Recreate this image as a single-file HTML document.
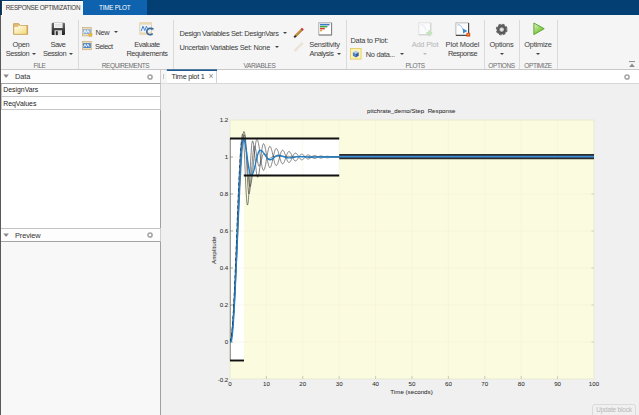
<!DOCTYPE html>
<html><head><meta charset="utf-8"><title>Response Optimization</title>
<style>
html,body{margin:0;padding:0;}
body{width:639px;height:415px;overflow:hidden;background:#f0f0f0;font-family:"Liberation Sans",sans-serif;position:relative;color:#222;}
.abs{position:absolute;}
#tabbar{left:0;top:0;width:639px;height:15px;background:#043f74;}
#tab1{white-space:nowrap;left:2px;top:1px;width:81px;height:15px;background:#f5f5f5;border-left:1px solid #fff;border-top:1px solid #fff;box-sizing:border-box;color:#3a3a3a;font-size:6.3px;line-height:12px;text-align:center;letter-spacing:-0.32px;}
#tab2{white-space:nowrap;left:83px;top:0;width:63.5px;height:15px;background:#0f63ae;color:#fff;font-size:6.3px;line-height:15px;text-align:center;letter-spacing:-0.2px;}
#ribbon{left:1px;top:15px;width:638px;height:55px;background:#f5f5f5;border-bottom:1px solid #c8c8c8;box-sizing:border-box;}
.sep{position:absolute;top:20px;width:1px;height:49px;background:#dadada;}
.lbl{position:absolute;top:61.9px;font-size:6.5px;color:#6e6e6e;text-align:center;line-height:8px;letter-spacing:-0.42px;white-space:nowrap;}
.rt{position:absolute;font-size:7.4px;color:#3c3c3c;line-height:9.25px;white-space:nowrap;text-align:center;letter-spacing:-0.3px;}
.rl{position:absolute;font-size:7.4px;color:#3c3c3c;line-height:9px;white-space:nowrap;text-align:left;letter-spacing:-0.35px;}
.dd{position:absolute;width:0;height:0;border-left:2.3px solid transparent;border-right:2.3px solid transparent;border-top:2.6px solid #444;margin-left:-0.3px}
.di{display:inline-block;width:0;height:0;border-left:2.3px solid transparent;border-right:2.3px solid transparent;border-top:2.6px solid #444;vertical-align:middle;margin-left:3px;margin-bottom:1px;}
.panelhdr{position:absolute;left:1px;width:159px;height:13px;background:#fdfdfd;border-bottom:1px solid #a4a4a4;border-right:1px solid #cdcdcd;font-size:7.4px;line-height:13px;color:#333;letter-spacing:-0.1px;}
.row{position:absolute;left:1px;width:158px;height:12px;background:#fff;border:1px solid #c6c6c6;border-top:none;font-size:6.9px;line-height:12px;color:#222;text-indent:1.2px;box-sizing:content-box;}
.tk{font-size:6.2px;fill:#303030;stroke:#303030;stroke-width:0.05px;font-family:"Liberation Sans",sans-serif;}
</style></head><body>

<div id="tabbar" class="abs"></div>
<div id="ribbon" class="abs"></div>
<div id="tab1" class="abs">RESPONSE OPTIMIZATION</div>
<div id="tab2" class="abs">TIME PLOT</div>

<!-- separators -->
<div class="sep" style="left:78px"></div>
<div class="sep" style="left:173px"></div>
<div class="sep" style="left:346px"></div>
<div class="sep" style="left:484px"></div>
<div class="sep" style="left:519px"></div>
<div class="sep" style="left:557px"></div>

<!-- section labels -->
<div class="lbl" style="left:1px;width:77px">FILE</div>
<div class="lbl" style="left:78px;width:95px">REQUIREMENTS</div>
<div class="lbl" style="left:173px;width:173px">VARIABLES</div>
<div class="lbl" style="left:346px;width:138px">PLOTS</div>
<div class="lbl" style="left:484px;width:35px">OPTIONS</div>
<div class="lbl" style="left:519px;width:38px">OPTIMIZE</div>

<!-- FILE -->
<svg class="abs" style="left:12px;top:22px" width="18" height="15" viewBox="0 0 18 15">
  <defs><linearGradient id="fg" x1="0" y1="0" x2="1" y2="1"><stop offset="0" stop-color="#fffdf0"/><stop offset="1" stop-color="#f3dc7c"/></linearGradient></defs>
  <path d="M1.6 1.7 h5.2 l1.4 1.8 h7.4 v8.8 h-14z" fill="#e3c078" stroke="#c79c52" stroke-width="0.9"/>
  <path d="M2.3 4.9 h3.2 l1.2 -1.1 h7.4 v8 h-11.8z" fill="url(#fg)"/>
</svg>
<div class="rt" style="left:1px;top:40px;width:40px">Open<br><span style="letter-spacing:-0.38px">Session</span><span class="di"></span></div>
<svg class="abs" style="left:51px;top:22px" width="15" height="14" viewBox="0 0 15 14">
  <defs><linearGradient id="sg" x1="0" y1="0" x2="0" y2="1"><stop offset="0" stop-color="#6e6e6e"/><stop offset="1" stop-color="#1e1e1e"/></linearGradient></defs>
  <rect x="0.7" y="0.7" width="13.3" height="12.4" rx="1" fill="url(#sg)"/>
  <rect x="3" y="1" width="8.6" height="5" fill="#f4f4f4"/>
  <path d="M4 2.6h6.5M4 4.2h6.5" stroke="#c8c8c8" stroke-width="0.5"/>
  <rect x="3.5" y="8.3" width="7.5" height="4.8" fill="#dedede"/>
  <rect x="4.8" y="9.2" width="2" height="3.9" fill="#333"/>
</svg>
<div class="rt" style="left:38px;top:40px;width:40px"><span style="letter-spacing:-0.45px">Save</span><br><span style="letter-spacing:-0.45px">Session</span><span class="di"></span></div>

<!-- REQUIREMENTS -->
<svg class="abs" style="left:81.5px;top:27px" width="11" height="10" viewBox="0 0 11 10">
  <rect x="0.5" y="0.5" width="8.8" height="8.4" fill="#ecdcb4" stroke="#c9ae80" stroke-width="0.7"/>
  <rect x="1" y="2.2" width="7.8" height="4.8" fill="#8fb4e2"/>
  <path d="M1.6 6.2 L3 3.2 L4.4 5.8 L5.8 3.2 L7.2 5.8" fill="none" stroke="#fff" stroke-width="0.9"/>
  <path d="M8.4 5.6 l0.7 1.4 1.5 0.2 -1.1 1.1 0.3 1.5 -1.4 -0.7 -1.4 0.7 0.3 -1.5 -1.1 -1.1 1.5 -0.2z" fill="#f2c12e" stroke="#b98d1c" stroke-width="0.3"/>
</svg>
<div class="rl" style="left:95.5px;top:28px;font-size:7.4px">New</div>
<div class="dd" style="left:114.2px;top:30.8px"></div>
<svg class="abs" style="left:81.5px;top:41px" width="11" height="10" viewBox="0 0 11 10">
  <rect x="0.5" y="0.5" width="8.8" height="8.2" fill="#ecdcb4" stroke="#c9ae80" stroke-width="0.7"/>
  <rect x="1" y="2.1" width="7.8" height="4.9" fill="#4a86cc"/>
  <path d="M1.6 6.2 L3 3.2 L4.4 5.8 L5.8 3.2 L7.2 5.8" fill="none" stroke="#fff" stroke-width="0.9"/>
</svg>
<div class="rl" style="left:95px;top:42px;font-size:7.4px;letter-spacing:-0.5px">Select</div>
<svg class="abs" style="left:139px;top:22px" width="16" height="15" viewBox="0 0 16 15">
  <rect x="0.8" y="0.8" width="11.8" height="11.4" fill="#edf2f9" stroke="#d8c298" stroke-width="0.7"/>
  <rect x="0.8" y="0.8" width="11.8" height="1.8" fill="#ecd9ae"/>
  <rect x="0.8" y="10.4" width="11.8" height="1.8" fill="#ecd9ae"/>
  <path d="M2.2 9 L4 4.2 L5.8 8.6 L7.4 4.2 L8.4 6.5" fill="none" stroke="#4a86cc" stroke-width="1"/>
  <path d="M13.6 11.4 A3.2 3.2 0 1 1 13.4 7.4" fill="none" stroke="#3e6a9c" stroke-width="1.7"/>
  <path d="M11.9 5.6 L14.6 5.9 L14.2 8.6z" fill="#3e6a9c"/>
</svg>
<div class="rt" style="left:122px;top:40px;width:50px;letter-spacing:-0.4px">Evaluate<br>Requirements</div>

<!-- VARIABLES -->
<div class="rl" style="left:179.5px;top:28.8px;letter-spacing:-0.35px">Design Variables Set: DesignVars</div>
<div class="dd" style="left:283.5px;top:31.5px"></div>
<div class="rl" style="left:179.5px;top:42.6px;letter-spacing:-0.29px">Uncertain Variables Set: None</div>
<div class="dd" style="left:274.8px;top:45.5px"></div>
<svg class="abs" style="left:292.5px;top:27px" width="12" height="12" viewBox="0 0 12 12">
  <path d="M2.4 9 L8.8 2.6" stroke="#c89448" stroke-width="2.5" stroke-linecap="butt"/>
  <path d="M2.9 9.5 L9.3 3.1" stroke="#9a6a2a" stroke-width="0.7"/>
  <path d="M1.2 10.4 L2.9 8.7" stroke="#3a3028" stroke-width="2"/>
  <path d="M8.5 3 L9.9 1.6" stroke="#c83838" stroke-width="2.5"/>
</svg>
<svg class="abs" style="left:292.5px;top:41px" width="12" height="12" viewBox="0 0 12 12">
  <path d="M1.6 10 L9.8 1.8" stroke="#ebe4d6" stroke-width="2.5" stroke-linecap="butt"/>
</svg>
<svg class="abs" style="left:317.5px;top:21.6px" width="15" height="14" viewBox="0 0 15 14">
  <rect x="0.8" y="0.8" width="12.8" height="12.2" fill="#fefefe" stroke="#a4a4a4" stroke-width="0.9"/>
  <path d="M13.6 1 V13 H1" fill="none" stroke="#7c7c7c" stroke-width="0.9"/>
  <rect x="2" y="1.9" width="9.6" height="1.5" fill="#3a78c8"/>
  <rect x="2" y="3.9" width="7.4" height="1.5" fill="#3aa844"/>
  <rect x="2" y="5.9" width="4.8" height="1.5" fill="#d83a30"/>
  <rect x="2" y="7.9" width="2" height="1.4" fill="#e8a030"/>
</svg>
<div class="rt" style="left:304px;top:40px;width:41px;letter-spacing:-0.25px"><span style="margin-right:0px">Sensitivity</span><br><span style="margin-left:1px;letter-spacing:-0.44px">Analysis<span class="di"></span></span></div>

<!-- PLOTS -->
<div class="rl" style="left:350.5px;top:35.7px;letter-spacing:-0.24px">Data to Plot:</div>
<svg class="abs" style="left:350px;top:47.8px" width="12" height="12" viewBox="0 0 12 12">
  <rect x="0.5" y="0.5" width="10.6" height="10.6" fill="#fbf2b8" stroke="#e4cd62" stroke-width="0.9"/>
  <path d="M2.9 4.3 L5.8 2.8 L8.7 4.3 L5.8 5.9z" fill="#a9c9ef"/>
  <path d="M2.9 4.3 L5.8 5.9 V9.4 L2.9 7.8z" fill="#4a7ec4"/>
  <path d="M8.7 4.3 L5.8 5.9 V9.4 L8.7 7.8z" fill="#2f5fa4"/>
</svg>
<div class="rl" style="left:365.8px;top:49.7px;letter-spacing:-0.3px">No data...</div>
<div class="dd" style="left:399.8px;top:52.5px"></div>
<svg class="abs" style="left:417.5px;top:21.8px" width="16" height="15" viewBox="0 0 16 15">
  <rect x="0.8" y="0.8" width="12" height="12" fill="#fbfbfb" stroke="#dcdcdc" stroke-width="0.8"/>
  <path d="M12.8 1 V12.8 H1" fill="none" stroke="#cfcfcf" stroke-width="1"/>
  <path d="M2.5 3 Q6 1.5 8 8.5" fill="none" stroke="#dbe5f2" stroke-width="0.8"/>
  <path d="M11.2 8.2 v6 M8.2 11.2 h6" stroke="#c6e3bf" stroke-width="2.2"/>
</svg>
<div class="rt" style="left:405px;top:40px;width:40px;color:#b4b4b4;letter-spacing:-0.15px">Add Plot</div>
<div class="dd" style="left:423px;top:52.5px;border-top-color:#bbb"></div>
<svg class="abs" style="left:454.5px;top:21.6px" width="17" height="16" viewBox="0 0 17 16">
  <rect x="0.9" y="0.9" width="12.6" height="12.4" fill="#fefefe" stroke="#a8a8a8" stroke-width="0.8"/>
  <path d="M13.6 1 V13.4 H1" fill="none" stroke="#4a4a4a" stroke-width="1.2"/>
  <path d="M2.3 3 Q6 1.4 8.3 8.6" fill="none" stroke="#86b0e6" stroke-width="0.8"/>
  <path d="M8 6.6 L12.4 9 L8 11.4z" fill="#3a8ad8"/>
  <rect x="11.4" y="10.8" width="3.8" height="3.8" fill="#d8501c"/>
  <rect x="12.4" y="11.6" width="1.6" height="1.6" fill="#f0a040"/>
</svg>
<div class="rt" style="left:440px;top:40px;width:45px;letter-spacing:-0.11px">Plot Model<br><span style="letter-spacing:-0.52px">Response</span></div>

<!-- OPTIONS -->
<svg class="abs" style="left:495px;top:22.5px" width="14" height="14" viewBox="0 0 14 14">
  <defs><radialGradient id="gg"><stop offset="0" stop-color="#f4f4f4"/><stop offset="1" stop-color="#b8b8b8"/></radialGradient></defs>
  <circle cx="6.7" cy="6.6" r="5.3" fill="none" stroke="#6a6a6a" stroke-width="1.2" stroke-dasharray="2.4,1.763"/>
  <circle cx="6.7" cy="6.6" r="5" fill="#606060"/>
  <circle cx="6.7" cy="6.6" r="3.1" fill="#4e4e4e"/><circle cx="6.7" cy="6.6" r="2.4" fill="url(#gg)"/>
</svg>
<div class="rt" style="left:484px;top:40px;width:35px;letter-spacing:-0.21px">Options</div>
<div class="dd" style="left:499.8px;top:52.5px"></div>

<!-- OPTIMIZE -->
<svg class="abs" style="left:531.5px;top:21px" width="14" height="15" viewBox="0 0 14 15">
  <defs><linearGradient id="pg" x1="0" y1="0" x2="0.8" y2="1"><stop offset="0" stop-color="#e4f4d0"/><stop offset="0.6" stop-color="#8fd058"/><stop offset="1" stop-color="#6cb83a"/></linearGradient></defs>
  <path d="M1.9 2 L12.2 7.7 L1.9 13.6z" fill="url(#pg)" stroke="#5aa630" stroke-width="1" stroke-linejoin="round"/>
</svg>
<div class="rt" style="left:519px;top:40px;width:38px;letter-spacing:-0.21px">Optimize</div>
<div class="dd" style="left:536.2px;top:52.5px"></div>

<!-- collapse icon -->
<svg class="abs" style="left:628px;top:60px" width="8" height="8" viewBox="0 0 8 8">
  <path d="M1 1.6 h6" stroke="#8a8a8a" stroke-width="1"/>
  <path d="M1.2 6.9 L4 3.4 L6.8 6.9z" fill="#8a8a8a"/>
</svg>

<!-- LEFT PANEL -->
<div class="abs" style="left:1px;top:70px;width:159px;height:345px;background:#fff;border-right:1px solid #a0a0a0;"></div>
<div class="panelhdr" style="top:70px"><span style="position:absolute;left:14px">Data</span></div>
<svg class="abs" style="left:3.4px;top:74.4px" width="7" height="5" viewBox="0 0 7 5"><path d="M0.3 0.4 H5.9 L3.1 4z" fill="#8a8a8a"/></svg>
<svg class="abs" style="left:145.5px;top:72.8px" width="8" height="8" viewBox="0 0 8 8"><circle cx="4" cy="4" r="2.1" fill="#fff" stroke="#a2a2a2" stroke-width="1.5"/></svg>
<div class="row" style="top:84px">DesignVars</div>
<div class="row" style="top:97px;height:12px;line-height:13.2px">ReqValues</div>
<div class="panelhdr" style="top:228px;border-top:1px solid #c2c2c2;height:12px;line-height:13.4px"><span style="position:absolute;left:14px">Preview</span></div>
<svg class="abs" style="left:3.4px;top:233.2px" width="7" height="5" viewBox="0 0 7 5"><path d="M0.3 0.4 H5.9 L3.1 4z" fill="#8a8a8a"/></svg>
<svg class="abs" style="left:145.5px;top:231.0px" width="8" height="8" viewBox="0 0 8 8"><circle cx="4" cy="4" r="2.1" fill="#fff" stroke="#a2a2a2" stroke-width="1.5"/></svg>
<div class="abs" style="left:1px;top:242px;width:159px;height:173px;background:#f8f8f8;"></div>

<!-- DOC AREA -->
<div class="abs" style="left:161px;top:70px;width:6px;height:13px;background:#f6f6f6;border-bottom:1px solid #dcdcdc;border-radius:0 0 2px 2px;"></div>
<div class="abs" style="left:163.4px;top:73.5px;width:1px;height:5.5px;background:#c4c4c4;"></div>
<div class="abs" style="left:167px;top:70px;width:472px;height:13px;background:#fff;border-bottom:1px solid #d8d8d8;"></div>
<div class="abs" style="left:167px;top:70px;width:50px;height:13px;background:#fff;box-sizing:border-box;border-right:1px solid #d4d4d4;font-size:7.2px;line-height:11px;color:#2a2a2a;white-space:nowrap;letter-spacing:-0.22px"><span style="position:absolute;left:4.6px;top:1.4px">Time plot 1</span><span style="position:absolute;left:41.6px;top:1.2px;color:#858585;font-size:8.6px">×</span></div>
<svg class="abs" style="left:623.3px;top:72.5px" width="8" height="8" viewBox="0 0 8 8"><circle cx="4" cy="4" r="2.1" fill="#fff" stroke="#a2a2a2" stroke-width="1.5"/></svg>

<!-- PLOT -->
<svg class="abs" style="left:0;top:0" width="639" height="415" viewBox="0 0 639 415">
  <defs><clipPath id="ax"><rect x="230" y="120" width="364" height="259"/></clipPath></defs>
  <rect x="166.8" y="69.4" width="50.2" height="1.5" fill="#0b4a86"/>
  <rect x="230" y="120" width="364" height="259" fill="#fbfbdf"/>
  <!-- allowed white region -->
  <path d="M230 138.5 H339.2 V155 H594 V159 H339.2 V175.5 H244 V360.5 H230z" fill="#fff"/>
  <!-- grid -->
  <g stroke="#f3f2dc" stroke-width="0.6">
    <path d="M266.4 120V379 M302.8 120V379 M339.2 120V379 M375.6 120V379 M412 120V379 M448.4 120V379 M484.8 120V379 M521.2 120V379 M557.6 120V379"/>
    <path d="M230 157H594 M230 194H594 M230 231H594 M230 268H594 M230 305H594 M230 342H594"/>
  </g>
  <!-- axes box -->
  <rect x="230" y="120" width="364" height="259" fill="none" stroke="#e6e6cc" stroke-width="0.8"/>
  <path d="M230.3 138.5 V360.5" fill="none" stroke="#555" stroke-width="0.7"/>
  <g stroke="#777" stroke-width="0.6">
    <path d="M230 157h3 M230 194h3 M230 231h3 M230 268h3 M230 305h3 M230 342h3"/>
    <path d="M594 157h-2.5 M594 194h-2.5 M594 231h-2.5 M594 268h-2.5 M594 305h-2.5 M594 342h-2.5" stroke="#b5b5a5"/>
    <path stroke="#b0b0a0" d="M266.4 379v-3 M302.8 379v-3 M339.2 379v-3 M375.6 379v-3 M412 379v-3 M448.4 379v-3 M484.8 379v-3 M521.2 379v-3 M557.6 379v-3"/>
  </g>
  <g clip-path="url(#ax)">
  <path d="M230.0 342.0L230.3 341.9L230.5 341.4L230.8 340.6L231.1 339.5L231.4 338.0L231.6 336.2L231.9 334.1L232.2 331.7L232.4 328.9L232.7 325.8L233.0 322.4L233.3 318.8L233.5 314.8L233.8 310.6L234.1 306.1L234.3 301.3L234.6 296.3L234.9 291.1L235.2 285.7L235.4 280.1L235.7 274.3L236.0 268.4L236.2 262.4L236.5 256.2L236.8 250.0L237.1 243.6L237.3 237.3L237.6 230.9L237.9 224.5L238.1 218.1L238.4 211.8L238.7 205.5L239.0 199.4L239.2 193.3L239.5 187.4L239.8 181.7L240.0 176.2L240.3 170.8L240.6 165.8L240.9 161.0L241.1 156.4L241.4 152.2L241.7 148.3L241.9 144.8L242.2 141.6L242.5 138.9L242.8 136.5L243.0 134.6L243.3 133.1L243.6 132.1L243.8 131.6L244.1 131.5L244.4 132.0L244.7 133.0L244.9 134.6L245.2 136.6L245.5 139.1L245.7 142.1L246.0 145.3L246.3 148.8L246.6 152.5L246.8 156.4L247.1 160.3L247.4 164.2L247.6 168.0L247.9 171.6L248.2 174.9L248.5 178.0L248.7 180.6L249.0 182.8L249.3 184.5L249.5 185.8L249.8 186.5L250.1 186.6L250.4 186.3L250.6 185.7L250.9 184.7L251.2 183.4L251.4 181.8L251.7 179.9L252.0 177.7L252.3 175.4L252.5 172.8L252.8 170.1L253.1 167.3L253.4 164.4L253.6 161.5L253.9 158.6L254.2 155.8L254.4 153.1L254.7 150.5L255.0 148.1L255.3 146.0L255.5 144.1L255.8 142.5L256.1 141.2L256.3 140.3L256.6 139.7L256.9 139.4L257.2 139.5L257.4 139.8L257.7 140.4L258.0 141.3L258.2 142.3L258.5 143.6L258.8 145.1L259.1 146.7L259.3 148.5L259.6 150.4L259.9 152.3L260.1 154.3L260.4 156.3L260.7 158.3L261.0 160.2L261.2 162.1L261.5 163.8L261.8 165.4L262.0 166.7L262.3 167.9L262.6 168.9L262.9 169.6L263.1 170.1L263.4 170.3L263.7 170.3L263.9 170.0L264.2 169.6L264.5 168.9L264.8 168.1L265.0 167.0L265.3 165.9L265.6 164.5L265.8 163.1L266.1 161.6L266.4 160.0L266.7 158.4L266.9 156.8L267.2 155.3L267.5 153.7L267.7 152.3L268.0 151.0L268.3 149.8L268.6 148.7L268.8 147.9L269.1 147.2L269.4 146.7L269.6 146.4L269.9 146.3L270.2 146.5L270.5 146.8L270.7 147.2L271.0 147.8L271.3 148.6L271.5 149.5L271.8 150.5L272.1 151.6L272.4 152.7L272.6 154.0L272.9 155.3L273.2 156.5L273.4 157.8L273.7 159.1L274.0 160.2L274.3 161.3L274.5 162.3L274.8 163.2L275.1 164.0L275.3 164.6L275.6 165.1L275.9 165.4L276.2 165.5L276.4 165.5L276.7 165.3L277.0 165.0L277.2 164.6L277.5 164.0L277.8 163.4L278.1 162.6L278.3 161.8L278.6 160.8L278.9 159.9L279.1 158.9L279.4 157.8L279.7 156.8L280.0 155.8L280.2 154.8L280.5 153.9L280.8 153.1L281.0 152.3L281.3 151.7L281.6 151.1L281.9 150.7L282.1 150.4L282.4 150.2L282.7 150.2L282.9 150.3L283.2 150.5L283.5 150.8L283.8 151.2L284.0 151.7L284.3 152.2L284.6 152.9L284.8 153.6L285.1 154.3L285.4 155.1L285.7 155.9L285.9 156.8L286.2 157.6L286.5 158.4L286.7 159.1L287.0 159.8L287.3 160.5L287.6 161.0L287.8 161.5L288.1 161.9L288.4 162.2L288.6 162.4L288.9 162.5L289.2 162.4L289.5 162.3L289.7 162.1L290.0 161.9L290.3 161.5L290.5 161.1L290.8 160.6L291.1 160.1L291.4 159.5L291.6 159.0L291.9 158.3L292.2 157.7L292.4 157.1L292.7 156.5L293.0 155.9L293.3 155.3L293.5 154.8L293.8 154.3L294.1 153.9L294.3 153.6L294.6 153.4L294.9 153.2L295.2 153.1L295.4 153.1L295.7 153.1L296.0 153.2L296.2 153.4L296.5 153.6L296.8 153.9L297.1 154.2L297.3 154.6L297.6 155.0L297.9 155.4L298.2 155.8L298.4 156.3L298.7 156.7L299.0 157.2L299.2 157.6L299.5 158.0L299.8 158.4L300.1 158.8L300.3 159.1L300.6 159.3L300.9 159.5L301.1 159.7L301.4 159.8L301.7 159.8L302.0 159.8L302.2 159.8L302.5 159.6L302.8 159.5L303.0 159.3L303.3 159.1L303.6 158.9L303.9 158.6L304.1 158.3L304.4 158.0L304.7 157.7L304.9 157.3L305.2 157.0L305.5 156.7L305.8 156.4L306.0 156.1L306.3 155.8L306.6 155.6L306.8 155.4L307.1 155.2L307.4 155.1L307.7 155.0L307.9 155.0L308.2 155.0L308.5 155.0L308.7 155.1L309.0 155.1L309.3 155.3L309.6 155.4L309.8 155.6L310.1 155.8L310.4 156.0L310.6 156.2L310.9 156.4L311.2 156.6L311.5 156.9L311.7 157.1L312.0 157.3L312.3 157.5L312.5 157.7L312.8 157.9L313.1 158.1L313.4 158.2L313.6 158.3L313.9 158.4L314.2 158.4L314.4 158.5L314.7 158.5L315.0 158.4L315.3 158.4L315.5 158.3L315.8 158.2L316.1 158.1L316.3 158.0L316.6 157.8L316.9 157.7L317.2 157.5L317.4 157.3L317.7 157.2L318.0 157.0L318.2 156.8L318.5 156.7L318.8 156.5L319.1 156.4L319.3 156.3L319.6 156.2L319.9 156.1L320.1 156.0L320.4 156.0L320.7 155.9L321.0 155.9L321.2 156.0L321.5 156.0L321.8 156.0L322.0 156.1L322.3 156.2L322.6 156.3L322.9 156.4L323.1 156.5L323.4 156.6L323.7 156.7L323.9 156.8L324.2 156.9L324.5 157.1L324.8 157.2L325.0 157.3L325.3 157.4L325.6 157.5L325.8 157.6L326.1 157.6L326.4 157.7L326.7 157.7L326.9 157.8L327.2 157.8L327.5 157.8L327.7 157.7L328.0 157.7L328.3 157.7L328.6 157.6L328.8 157.6L329.1 157.5L329.4 157.4L329.6 157.3L329.9 157.3L330.2 157.2L330.5 157.1L330.7 157.0L331.0 156.9L331.3 156.8L331.5 156.7L331.8 156.7L332.1 156.6L332.4 156.6L332.6 156.5L332.9 156.5L333.2 156.5L333.4 156.5L333.7 156.5L334.0 156.5L334.3 156.5L334.5 156.5L334.8 156.5L335.1 156.6L335.3 156.6L335.6 156.7L335.9 156.7L336.2 156.8L336.4 156.9L336.7 156.9L337.0 157.0L337.2 157.0L337.5 157.1L337.8 157.2L338.1 157.2L338.3 157.3L338.6 157.3L338.9 157.3L339.1 157.4L339.4 157.4L339.7 157.4L340.0 157.4L340.2 157.4L340.5 157.4L340.8 157.4L341.0 157.3L341.3 157.3L341.6 157.3L341.9 157.3L342.1 157.2L342.4 157.2L342.7 157.1L343.0 157.1L343.2 157.0L343.5 157.0L343.8 156.9L344.0 156.9L344.3 156.9L344.6 156.8L344.9 156.8L345.1 156.8L345.4 156.7L345.7 156.7L345.9 156.7L346.2 156.7L346.5 156.7" fill="none" stroke="#3c3c3c" stroke-width="0.62"/>
<path d="M230.0 342.0L230.3 341.8L230.5 341.3L230.8 340.3L231.1 339.0L231.4 337.2L231.6 335.1L231.9 332.5L232.2 329.6L232.4 326.3L232.7 322.7L233.0 318.7L233.3 314.3L233.5 309.6L233.8 304.6L234.1 299.3L234.3 293.8L234.6 288.0L234.9 281.9L235.2 275.7L235.4 269.3L235.7 262.7L236.0 256.0L236.2 249.1L236.5 242.3L236.8 235.3L237.1 228.4L237.3 221.4L237.6 214.5L237.9 207.7L238.1 201.0L238.4 194.4L238.7 188.1L239.0 181.9L239.2 175.9L239.5 170.3L239.8 164.9L240.0 159.9L240.3 155.2L240.6 150.9L240.9 147.1L241.1 143.6L241.4 140.7L241.7 138.3L241.9 136.3L242.2 134.9L242.5 134.1L242.8 133.9L243.0 134.5L243.3 136.3L243.6 139.2L243.8 143.1L244.1 147.8L244.4 153.2L244.7 159.1L244.9 165.4L245.2 171.8L245.5 178.2L245.7 184.2L246.0 189.8L246.3 194.7L246.6 198.8L246.8 202.0L247.1 204.1L247.4 205.0L247.6 204.9L247.9 203.9L248.2 202.0L248.5 199.3L248.7 195.9L249.0 191.8L249.3 187.2L249.5 182.2L249.8 176.9L250.1 171.6L250.4 166.3L250.6 161.1L250.9 156.3L251.2 152.0L251.4 148.2L251.7 145.2L252.0 142.9L252.3 141.5L252.5 140.9L252.8 141.1L253.1 141.8L253.4 143.0L253.6 144.6L253.9 146.7L254.2 149.0L254.4 151.7L254.7 154.6L255.0 157.6L255.3 160.6L255.5 163.6L255.8 166.5L256.1 169.2L256.3 171.6L256.6 173.6L256.9 175.3L257.2 176.4L257.4 177.1L257.7 177.3L258.0 177.1L258.2 176.6L258.5 175.6L258.8 174.4L259.1 172.8L259.3 171.0L259.6 169.0L259.9 166.8L260.1 164.5L260.4 162.0L260.7 159.6L261.0 157.1L261.2 154.7L261.5 152.5L261.8 150.4L262.0 148.6L262.3 147.0L262.6 145.7L262.9 144.7L263.1 144.0L263.4 143.7L263.7 143.7L263.9 144.0L264.2 144.4L264.5 145.1L264.8 145.9L265.0 147.0L265.3 148.1L265.6 149.5L265.8 150.9L266.1 152.4L266.4 154.0L266.7 155.6L266.9 157.2L267.2 158.7L267.5 160.3L267.7 161.7L268.0 163.0L268.3 164.2L268.6 165.3L268.8 166.1L269.1 166.8L269.4 167.3L269.6 167.6L269.9 167.7L270.2 167.5L270.5 167.2L270.7 166.8L271.0 166.2L271.3 165.4L271.5 164.5L271.8 163.5L272.1 162.4L272.4 161.3L272.6 160.0L272.9 158.7L273.2 157.5L273.4 156.2L273.7 154.9L274.0 153.8L274.3 152.7L274.5 151.7L274.8 150.8L275.1 150.0L275.3 149.4L275.6 148.9L275.9 148.6L276.2 148.5L276.4 148.5L276.7 148.7L277.0 149.0L277.2 149.4L277.5 150.0L277.8 150.6L278.1 151.4L278.3 152.2L278.6 153.2L278.9 154.1L279.1 155.1L279.4 156.2L279.7 157.2L280.0 158.2L280.2 159.2L280.5 160.1L280.8 160.9L281.0 161.7L281.3 162.3L281.6 162.9L281.9 163.3L282.1 163.6L282.4 163.8L282.7 163.8L282.9 163.7L283.2 163.5L283.5 163.2L283.8 162.8L284.0 162.3L284.3 161.8L284.6 161.1L284.8 160.4L285.1 159.7L285.4 158.9L285.7 158.1L285.9 157.2L286.2 156.4L286.5 155.6L286.7 154.9L287.0 154.2L287.3 153.5L287.6 153.0L287.8 152.5L288.1 152.1L288.4 151.8L288.6 151.6L288.9 151.5L289.2 151.6L289.5 151.7L289.7 151.9L290.0 152.1L290.3 152.5L290.5 152.9L290.8 153.4L291.1 153.9L291.4 154.5L291.6 155.0L291.9 155.7L292.2 156.3L292.4 156.9L292.7 157.5L293.0 158.1L293.3 158.7L293.5 159.2L293.8 159.7L294.1 160.1L294.3 160.4L294.6 160.6L294.9 160.8L295.2 160.9L295.4 160.9L295.7 160.9L296.0 160.8L296.2 160.6L296.5 160.4L296.8 160.1L297.1 159.8L297.3 159.4L297.6 159.0L297.9 158.6L298.2 158.2L298.4 157.7L298.7 157.3L299.0 156.8L299.2 156.4L299.5 156.0L299.8 155.6L300.1 155.2L300.3 154.9L300.6 154.7L300.9 154.5L301.1 154.3L301.4 154.2L301.7 154.2L302.0 154.2L302.2 154.2L302.5 154.4L302.8 154.5L303.0 154.7L303.3 154.9L303.6 155.1L303.9 155.4L304.1 155.7L304.4 156.0L304.7 156.3L304.9 156.7L305.2 157.0L305.5 157.3L305.8 157.6L306.0 157.9L306.3 158.2L306.6 158.4L306.8 158.6L307.1 158.8L307.4 158.9L307.7 159.0L307.9 159.0L308.2 159.0L308.5 159.0L308.7 158.9L309.0 158.9L309.3 158.7L309.6 158.6L309.8 158.4L310.1 158.2L310.4 158.0L310.6 157.8L310.9 157.6L311.2 157.4L311.5 157.1L311.7 156.9L312.0 156.7L312.3 156.5L312.5 156.3L312.8 156.1L313.1 155.9L313.4 155.8L313.6 155.7L313.9 155.6L314.2 155.6L314.4 155.5L314.7 155.5L315.0 155.6L315.3 155.6L315.5 155.7L315.8 155.8L316.1 155.9L316.3 156.0L316.6 156.2L316.9 156.3L317.2 156.5L317.4 156.7L317.7 156.8L318.0 157.0L318.2 157.2L318.5 157.3L318.8 157.5L319.1 157.6L319.3 157.7L319.6 157.8L319.9 157.9L320.1 158.0L320.4 158.0L320.7 158.1L321.0 158.1L321.2 158.0L321.5 158.0L321.8 158.0L322.0 157.9L322.3 157.8L322.6 157.7L322.9 157.6L323.1 157.5L323.4 157.4L323.7 157.3L323.9 157.2L324.2 157.1L324.5 156.9L324.8 156.8L325.0 156.7L325.3 156.6L325.6 156.5L325.8 156.4L326.1 156.4L326.4 156.3L326.7 156.3L326.9 156.2L327.2 156.2L327.5 156.2L327.7 156.3L328.0 156.3L328.3 156.3L328.6 156.4L328.8 156.4L329.1 156.5L329.4 156.6L329.6 156.7L329.9 156.7L330.2 156.8L330.5 156.9L330.7 157.0L331.0 157.1L331.3 157.2L331.5 157.3L331.8 157.3L332.1 157.4L332.4 157.4L332.6 157.5L332.9 157.5L333.2 157.5L333.4 157.5L333.7 157.5L334.0 157.5L334.3 157.5L334.5 157.5L334.8 157.5L335.1 157.4L335.3 157.4L335.6 157.3L335.9 157.3L336.2 157.2L336.4 157.1L336.7 157.1L337.0 157.0L337.2 157.0L337.5 156.9L337.8 156.8L338.1 156.8L338.3 156.7L338.6 156.7L338.9 156.7L339.1 156.6L339.4 156.6L339.7 156.6L340.0 156.6L340.2 156.6L340.5 156.6L340.8 156.6L341.0 156.7L341.3 156.7L341.6 156.7L341.9 156.7L342.1 156.8L342.4 156.8L342.7 156.9L343.0 156.9L343.2 157.0L343.5 157.0L343.8 157.1L344.0 157.1L344.3 157.1L344.6 157.2L344.9 157.2L345.1 157.2L345.4 157.3L345.7 157.3L345.9 157.3L346.2 157.3L346.5 157.3" fill="none" stroke="#3c3c3c" stroke-width="0.62"/>
<path d="M230.0 342.0L230.3 341.9L230.5 341.4L230.8 340.7L231.1 339.7L231.4 338.4L231.6 336.7L231.9 334.8L232.2 332.6L232.4 330.1L232.7 327.3L233.0 324.2L233.3 320.8L233.5 317.2L233.8 313.3L234.1 309.2L234.3 304.8L234.6 300.2L234.9 295.4L235.2 290.4L235.4 285.2L235.7 279.9L236.0 274.4L236.2 268.8L236.5 263.0L236.8 257.2L237.1 251.3L237.3 245.3L237.6 239.2L237.9 233.2L238.1 227.1L238.4 221.1L238.7 215.1L239.0 209.1L239.2 203.3L239.5 197.5L239.8 191.9L240.0 186.4L240.3 181.1L240.6 175.9L240.9 171.0L241.1 166.3L241.4 161.9L241.7 157.7L241.9 153.8L242.2 150.3L242.5 147.0L242.8 144.1L243.0 141.6L243.3 139.4L243.6 137.7L243.8 136.3L244.1 135.4L244.4 134.9L244.7 134.9L244.9 135.9L245.2 137.9L245.5 141.0L245.7 145.0L246.0 149.7L246.3 154.9L246.6 160.5L246.8 166.3L247.1 172.0L247.4 177.4L247.6 182.3L247.9 186.6L248.2 189.9L248.5 192.4L248.7 193.7L249.0 194.0L249.3 193.5L249.5 192.5L249.8 190.9L250.1 188.8L250.4 186.3L250.6 183.3L250.9 180.0L251.2 176.5L251.4 172.8L251.7 169.1L252.0 165.3L252.3 161.7L252.5 158.3L252.8 155.2L253.1 152.4L253.4 150.1L253.6 148.2L253.9 146.9L254.2 146.1L254.4 145.9L254.7 146.1L255.0 146.7L255.3 147.5L255.5 148.7L255.8 150.0L256.1 151.6L256.3 153.3L256.6 155.1L256.9 156.9L257.2 158.7L257.4 160.4L257.7 162.0L258.0 163.4L258.2 164.6L258.5 165.4L258.8 166.0L259.1 166.2L259.3 166.2L259.6 165.9L259.9 165.5L260.1 164.8L260.4 164.0L260.7 163.1L261.0 162.0L261.2 160.9L261.5 159.7L261.8 158.6L262.0 157.5L262.3 156.4L262.6 155.5L262.9 154.7L263.1 154.0L263.4 153.6L263.7 153.3L263.9 153.3L264.2 153.4L264.5 153.5L264.8 153.8L265.0 154.1L265.3 154.5L265.6 154.9L265.8 155.4L266.1 155.9L266.4 156.4L266.7 156.9L266.9 157.3L267.2 157.8L267.5 158.1L267.7 158.4L268.0 158.7L268.3 158.8L268.6 158.8L268.8 158.8L269.1 158.8L269.4 158.7L269.6 158.6L269.9 158.5L270.2 158.3L270.5 158.1L270.7 157.9L271.0 157.7L271.3 157.5L271.5 157.3L271.8 157.2L272.1 157.0L272.4 156.8L272.6 156.7L272.9 156.6L273.2 156.5L273.4 156.5L273.7 156.4L274.0 156.4L274.3 156.4L274.5 156.4L274.8 156.4L275.1 156.4L275.3 156.4L275.6 156.4L275.9 156.4L276.2 156.4L276.4 156.4L276.7 156.4L277.0 156.4L277.2 156.4L277.5 156.4L277.8 156.4L278.1 156.4L278.3 156.4L278.6 156.4L278.9 156.4L279.1 156.4L279.4 156.4L279.7 156.4L280.0 156.4L280.2 156.4L280.5 156.4L280.8 156.4L281.0 156.4L281.3 156.4L281.6 156.4L281.9 156.4L282.1 156.4L282.4 156.4L282.7 156.4L282.9 156.4L283.2 156.4L283.5 156.4L283.8 156.4L284.0 156.4L284.3 156.4L284.6 156.4L284.8 156.4L285.1 156.4L285.4 156.4L285.7 156.4L285.9 156.4L286.2 156.4L286.5 156.4L286.7 156.4L287.0 156.4L287.3 156.4L287.6 156.4L287.8 156.4L288.1 156.4L288.4 156.4L288.6 156.4L288.9 156.4L289.2 156.4L289.5 156.4L289.7 156.4L290.0 156.4L290.3 156.4L290.5 156.4L290.8 156.4L291.1 156.4L291.4 156.4L291.6 156.4L291.9 156.4L292.2 156.4L292.4 156.4L292.7 156.4L293.0 156.4L293.3 156.5L293.5 156.5L293.8 156.5L294.1 156.5L294.3 156.5L294.6 156.5L294.9 156.5L295.2 156.5L295.4 156.5L295.7 156.5L296.0 156.5L296.2 156.5L296.5 156.5L296.8 156.5L297.1 156.5L297.3 156.5L297.6 156.5L297.9 156.5L298.2 156.5L298.4 156.5L298.7 156.5L299.0 156.5L299.2 156.5L299.5 156.5L299.8 156.5L300.1 156.5L300.3 156.5L300.6 156.5L300.9 156.5L301.1 156.5L301.4 156.5L301.7 156.5L302.0 156.5L302.2 156.5L302.5 156.5L302.8 156.5L303.0 156.5L303.3 156.5L303.6 156.5L303.9 156.5L304.1 156.5L304.4 156.5L304.7 156.5L304.9 156.5L305.2 156.5L305.5 156.5L305.8 156.5L306.0 156.5L306.3 156.5L306.6 156.5L306.8 156.5L307.1 156.5L307.4 156.5L307.7 156.5L307.9 156.5L308.2 156.5L308.5 156.5L308.7 156.5L309.0 156.5L309.3 156.5L309.6 156.5L309.8 156.5L310.1 156.5L310.4 156.5L310.6 156.5L310.9 156.5L311.2 156.5L311.5 156.5L311.7 156.5L312.0 156.5L312.3 156.5L312.5 156.5L312.8 156.5L313.1 156.5L313.4 156.5L313.6 156.5L313.9 156.5L314.2 156.5L314.4 156.5L314.7 156.5L315.0 156.5L315.3 156.5L315.5 156.5L315.8 156.5L316.1 156.5L316.3 156.5L316.6 156.5L316.9 156.5L317.2 156.5L317.4 156.5L317.7 156.5L318.0 156.5L318.2 156.5L318.5 156.5L318.8 156.5L319.1 156.5L319.3 156.5L319.6 156.5L319.9 156.5L320.1 156.5L320.4 156.5L320.7 156.5L321.0 156.5L321.2 156.5L321.5 156.5L321.8 156.5L322.0 156.5L322.3 156.5L322.6 156.5L322.9 156.5L323.1 156.5L323.4 156.5L323.7 156.5L323.9 156.5L324.2 156.5L324.5 156.5L324.8 156.5L325.0 156.5L325.3 156.5L325.6 156.5L325.8 156.5L326.1 156.5L326.4 156.5L326.7 156.5L326.9 156.5L327.2 156.5L327.5 156.5L327.7 156.5L328.0 156.5L328.3 156.5L328.6 156.5L328.8 156.5L329.1 156.5L329.4 156.5L329.6 156.5L329.9 156.5L330.2 156.5L330.5 156.5L330.7 156.5L331.0 156.5L331.3 156.5L331.5 156.5L331.8 156.5L332.1 156.5L332.4 156.5L332.6 156.5L332.9 156.5L333.2 156.5L333.4 156.5L333.7 156.5L334.0 156.5L334.3 156.5L334.5 156.5L334.8 156.5L335.1 156.5L335.3 156.5L335.6 156.5L335.9 156.5L336.2 156.5L336.4 156.5L336.7 156.5L337.0 156.5L337.2 156.5L337.5 156.5L337.8 156.5L338.1 156.5L338.3 156.5L338.6 156.5L338.9 156.5L339.1 156.5L339.4 156.5L339.7 156.5L340.0 156.5L340.2 156.5L340.5 156.5L340.8 156.5L341.0 156.5L341.3 156.5L341.6 156.5L341.9 156.5L342.1 156.5L342.4 156.5L342.7 156.5L343.0 156.5L343.2 156.5L343.5 156.5L343.8 156.5L344.0 156.5L344.3 156.5L344.6 156.5L344.9 156.5L345.1 156.5L345.4 156.5L345.7 156.5L345.9 156.5L346.2 156.5L346.5 156.5" fill="none" stroke="#3c3c3c" stroke-width="0.62"/>
<path d="M230.8 341.9L231.1 341.5L231.4 340.8L231.6 339.6L231.9 338.0L232.2 336.0L232.4 333.6L232.7 330.8L233.0 327.6L233.3 324.1L233.5 320.2L233.8 316.0L234.1 311.4L234.3 306.5L234.6 301.4L234.9 295.9L235.2 290.2L235.4 284.2L235.7 278.1L236.0 271.7L236.2 265.2L236.5 258.5L236.8 251.8L237.1 245.0L237.3 238.1L237.6 231.2L237.9 224.3L238.1 217.4L238.4 210.7L238.7 204.0L239.0 197.5L239.2 191.2L239.5 185.1L239.8 179.2L240.0 173.6L240.3 168.3L240.6 163.4L240.9 158.8L241.1 154.6L241.4 150.8L241.7 147.5L241.9 144.7L242.2 142.4L242.5 140.6" fill="none" stroke="#1c2630" stroke-width="1.25" stroke-dasharray="3.4,2.4" transform="translate(-0.55,0)"/>
<path d="M230.0 342.0L230.3 342.0L230.5 342.0L230.8 341.9L231.1 341.5L231.4 340.8L231.6 339.6L231.9 338.0L232.2 336.0L232.4 333.6L232.7 330.8L233.0 327.6L233.3 324.1L233.5 320.2L233.8 316.0L234.1 311.4L234.3 306.5L234.6 301.4L234.9 295.9L235.2 290.2L235.4 284.2L235.7 278.1L236.0 271.7L236.2 265.2L236.5 258.5L236.8 251.8L237.1 245.0L237.3 238.1L237.6 231.2L237.9 224.3L238.1 217.4L238.4 210.7L238.7 204.0L239.0 197.5L239.2 191.2L239.5 185.1L239.8 179.2L240.0 173.6L240.3 168.3L240.6 163.4L240.9 158.8L241.1 154.6L241.4 150.8L241.7 147.5L241.9 144.7L242.2 142.4L242.5 140.6L242.8 139.3L243.0 138.6L243.3 138.5L243.6 138.7L243.8 139.1L244.1 139.7L244.4 140.5L244.7 141.4L244.9 142.6L245.2 143.9L245.5 145.4L245.7 147.0L246.0 148.7L246.3 150.5L246.6 152.4L246.8 154.3L247.1 156.3L247.4 158.3L247.6 160.3L247.9 162.2L248.2 164.1L248.5 165.8L248.7 167.5L249.0 169.1L249.3 170.5L249.5 171.8L249.8 172.9L250.1 173.8L250.4 174.5L250.6 175.1L250.9 175.4L251.2 175.5L251.4 175.4L251.7 175.3L252.0 175.0L252.3 174.6L252.5 174.1L252.8 173.5L253.1 172.8L253.4 172.0L253.6 171.1L253.9 170.2L254.2 169.2L254.4 168.1L254.7 167.0L255.0 165.8L255.3 164.7L255.5 163.5L255.8 162.3L256.1 161.1L256.3 159.9L256.6 158.7L256.9 157.6L257.2 156.5L257.4 155.5L257.7 154.6L258.0 153.7L258.2 153.0L258.5 152.3L258.8 151.7L259.1 151.2L259.3 150.8L259.6 150.5L259.9 150.4L260.1 150.3L260.4 150.4L260.7 150.4L261.0 150.5L261.2 150.6L261.5 150.8L261.8 151.0L262.0 151.2L262.3 151.5L262.6 151.7L262.9 152.0L263.1 152.3L263.4 152.7L263.7 153.0L263.9 153.4L264.2 153.8L264.5 154.2L264.8 154.6L265.0 155.0L265.3 155.4L265.6 155.8L265.8 156.2L266.1 156.6L266.4 157.0L266.7 157.4L266.9 157.7L267.2 158.0L267.5 158.3L267.7 158.6L268.0 158.9L268.3 159.1L268.6 159.3L268.8 159.4L269.1 159.6L269.4 159.7L269.6 159.7L269.9 159.8L270.2 159.8L270.5 159.7L270.7 159.7L271.0 159.6L271.3 159.5L271.5 159.4L271.8 159.2L272.1 159.1L272.4 158.9L272.6 158.7L272.9 158.5L273.2 158.3L273.4 158.1L273.7 157.8L274.0 157.6L274.3 157.4L274.5 157.1L274.8 156.9L275.1 156.7L275.3 156.5L275.6 156.3L275.9 156.1L276.2 155.9L276.4 155.8L276.7 155.6L277.0 155.5L277.2 155.4L277.5 155.4L277.8 155.3L278.1 155.3L278.3 155.3L278.6 155.4L278.9 155.4L279.1 155.4L279.4 155.4L279.7 155.5L280.0 155.5L280.2 155.6L280.5 155.6L280.8 155.7L281.0 155.8L281.3 155.9L281.6 156.0L281.9 156.0L282.1 156.1L282.4 156.2L282.7 156.3L282.9 156.4L283.2 156.5L283.5 156.6L283.8 156.7L284.0 156.8L284.3 156.9L284.6 157.0L284.8 157.1L285.1 157.2L285.4 157.3L285.7 157.4L285.9 157.5L286.2 157.5L286.5 157.6L286.7 157.7L287.0 157.7L287.3 157.8L287.6 157.8L287.8 157.9L288.1 157.9L288.4 157.9L288.6 157.9L288.9 157.9L289.2 157.9L289.5 157.9L289.7 157.9L290.0 157.9L290.3 157.9L290.5 157.8L290.8 157.8L291.1 157.8L291.4 157.8L291.6 157.7L291.9 157.7L292.2 157.6L292.4 157.6L292.7 157.5L293.0 157.5L293.3 157.4L293.5 157.4L293.8 157.3L294.1 157.3L294.3 157.2L294.6 157.2L294.9 157.1L295.2 157.1L295.4 157.0L295.7 157.0L296.0 156.9L296.2 156.9L296.5 156.8L296.8 156.8L297.1 156.8L297.3 156.7L297.6 156.7L297.9 156.7L298.2 156.7L298.4 156.6L298.7 156.6L299.0 156.6L299.2 156.6L299.5 156.6L299.8 156.6L300.1 156.6L300.3 156.6L300.6 156.7L300.9 156.7L301.1 156.7L301.4 156.7L301.7 156.7L302.0 156.7L302.2 156.7L302.5 156.7L302.8 156.8L303.0 156.8L303.3 156.8L303.6 156.8L303.9 156.8L304.1 156.9L304.4 156.9L304.7 156.9L304.9 156.9L305.2 157.0L305.5 157.0L305.8 157.0L306.0 157.0L306.3 157.0L306.6 157.1L306.8 157.1L307.1 157.1L307.4 157.1L307.7 157.1L307.9 157.1L308.2 157.1L308.5 157.2L308.7 157.2L309.0 157.2L309.3 157.2L309.6 157.2L309.8 157.2L310.1 157.2L310.4 157.2L310.6 157.2L310.9 157.2L311.2 157.2L311.5 157.2L311.7 157.2L312.0 157.2L312.3 157.2L312.5 157.2L312.8 157.2L313.1 157.2L313.4 157.1L313.6 157.1L313.9 157.1L314.2 157.1L314.4 157.1L314.7 157.1L315.0 157.1L315.3 157.1L315.5 157.1L315.8 157.1L316.1 157.1L316.3 157.1L316.6 157.1L316.9 157.1L317.2 157.1L317.4 157.0L317.7 157.0L318.0 157.0L318.2 157.0L318.5 157.0L318.8 157.0L319.1 157.0L319.3 157.0L319.6 157.0L319.9 157.0L320.1 157.0L320.4 157.0L320.7 157.0L321.0 157.0L321.2 157.0L321.5 157.0L321.8 157.0L322.0 157.0L322.3 157.0L322.6 157.0L322.9 157.0L323.1 157.0L323.4 157.0L323.7 157.0L323.9 157.0L324.2 157.0L324.5 157.0L324.8 157.0L325.0 157.0L325.3 157.0L325.6 157.0L325.8 157.0L326.1 157.0L326.4 157.0L326.7 157.0L326.9 157.0L327.2 157.0L327.5 157.0L327.7 157.0L328.0 157.0L328.3 157.0L328.6 157.0L328.8 157.0L329.1 157.0L329.4 157.0L329.6 157.0L329.9 157.0L330.2 157.0L330.5 157.0L330.7 157.0L331.0 157.0L331.3 157.0L331.5 157.0L331.8 157.0L332.1 157.0L332.4 157.0L332.6 157.0L332.9 157.0L333.2 157.0L333.4 157.0L333.7 157.0L334.0 157.0L334.3 157.0L334.5 157.0L334.8 157.0L335.1 157.0L335.3 157.0L335.6 157.0L335.9 157.0L336.2 157.0L336.4 157.0L336.7 157.0L337.0 157.0L337.2 157.0L337.5 157.0L337.8 157.0L338.1 157.0L338.3 157.0L338.6 157.0L338.9 157.0L339.1 157.0L339.4 157.0L339.7 157.0L340.0 157.0L340.2 157.0L340.5 157.0L340.8 157.0L341.0 157.0L341.3 157.0L341.6 157.0L341.9 157.0L342.1 157.0L342.4 157.0L342.7 157.0L343.0 157.0L343.2 157.0L343.5 157.0L343.8 157.0L344.0 157.0L344.3 157.0L344.6 157.0L344.9 157.0L345.1 157.0L345.4 157.0L345.7 157.0L345.9 157.0L346.2 157.0L346.5 157.0L350.1 157.0L385.0 157.0L419.8 157.0L454.6 157.0L489.5 157.0L524.3 157.0L559.2 157.0L594.0 157.0" fill="none" stroke="#1f7fc8" stroke-width="1.4" stroke-linejoin="round"/>

  </g>
  <!-- bounds -->
  <g stroke="#111" fill="none">
    <path d="M230 138.5 H339.2" stroke-width="2"/>
    <path d="M243.8 175.5 H339.2" stroke-width="2"/>
    <path d="M230 360.5 H244" stroke-width="1.9"/>
    <path d="M339.2 156.65 H594" stroke-width="5.1" stroke="#2c2c2c"/>
    
  </g>
  <path d="M339.2 156.7 H594" stroke="#3a8fd8" stroke-width="1.7"/>
  <!-- labels -->
  <g class="tk" text-anchor="end">
    <text x="228.3" y="122.2">1.2</text>
    <text x="228.3" y="159.2">1</text>
    <text x="228.3" y="196.2">0.8</text>
    <text x="228.3" y="233.2">0.6</text>
    <text x="228.3" y="270.2">0.4</text>
    <text x="228.3" y="307.2">0.2</text>
    <text x="228.3" y="344.2">0</text>
    <text x="228.3" y="381.5">-0.2</text>
  </g>
  <g class="tk" text-anchor="middle">
    <text x="230" y="386">0</text>
    <text x="266.4" y="386">10</text>
    <text x="302.8" y="386">20</text>
    <text x="339.2" y="386">30</text>
    <text x="375.6" y="386">40</text>
    <text x="412" y="386">50</text>
    <text x="448.4" y="386">60</text>
    <text x="484.8" y="386">70</text>
    <text x="521.2" y="386">80</text>
    <text x="557.6" y="386">90</text>
    <text x="594" y="386">100</text>
    <text x="411.5" y="393.7" style="font-size:6.2px">Time (seconds)</text>
    <text x="411.3" y="113.1" style="font-size:6.2px;white-space:pre" xml:space="preserve">pitchrate_demo/Step  Response</text>
    <text transform="translate(215.7,250.2) rotate(-90)" style="font-size:6.2px">Amplitude</text>
  </g>
</svg>

<!-- Update block button -->
<div class="abs" style="left:592.2px;top:403.6px;width:41.6px;height:12px;border:1px solid #dadada;border-radius:3px;background:#f0f0f0;color:#b6b6b6;font-size:6.4px;line-height:10.6px;text-align:center;white-space:nowrap;letter-spacing:-0.14px">Update block</div>

<!-- left window edge -->
<div class="abs" style="left:0;top:0;width:1px;height:15px;background:#1f2b36;"></div>
<div class="abs" style="left:0;top:15px;width:1px;height:400px;background:#5a5a5a;"></div>

</body></html>
